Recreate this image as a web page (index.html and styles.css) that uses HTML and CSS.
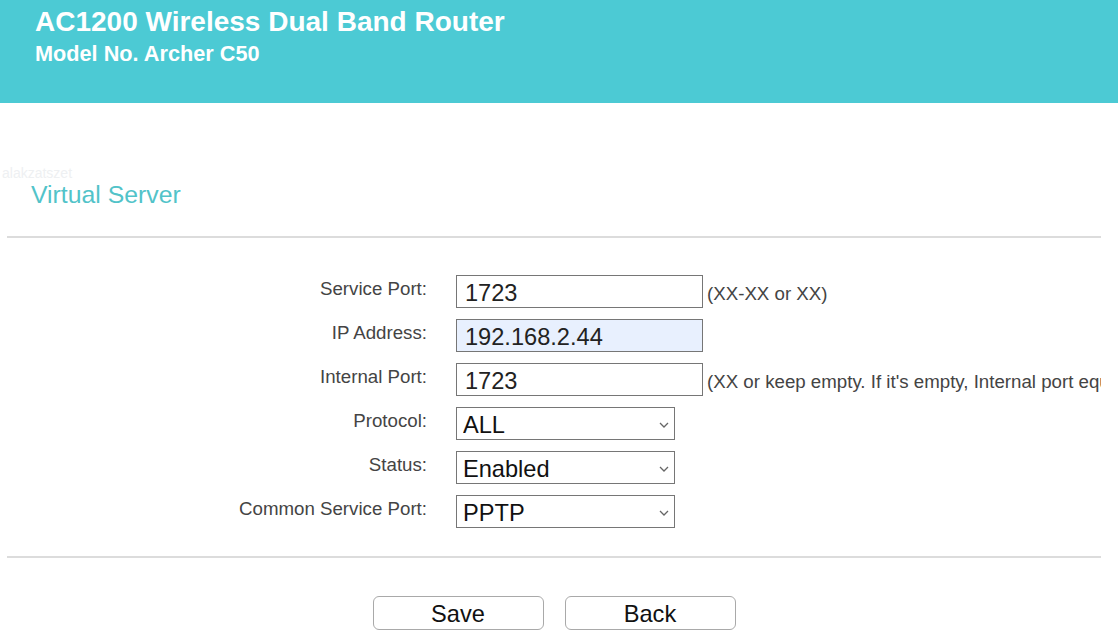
FILE: index.html
```html
<!DOCTYPE html>
<html>
<head>
<meta charset="utf-8">
<link rel="stylesheet" href="styles.css">
</head>
<body>
<header class="top">
  <div class="title">AC1200 Wireless Dual Band Router</div>
  <div class="model">Model No. Archer C50</div>
</header>
<div class="ghost">alakzatszet</div>
<main class="content">
  <h1 class="heading">Virtual Server</h1>
  <hr class="rule">
  <form class="form">
    <div class="row">
      <label class="label">Service Port:</label>
      <input class="field" type="text" value="1723">
      <span class="hint">(XX-XX or XX)</span>
    </div>
    <div class="row">
      <label class="label">IP Address:</label>
      <input class="field autofill" type="text" value="192.168.2.44">
    </div>
    <div class="row">
      <label class="label">Internal Port:</label>
      <input class="field" type="text" value="1723">
      <span class="hint">(XX or keep empty. If it's empty, Internal port equals to Service Port.)</span>
    </div>
    <div class="row">
      <label class="label">Protocol:</label>
      <div class="selwrap">
        <select class="sel"><option>ALL</option></select>
        <svg class="chev" width="10" height="6" viewBox="0 0 10 6"><path d="M1 1 L5 5 L9 1" fill="none" stroke="#666" stroke-width="1.3"/></svg>
      </div>
    </div>
    <div class="row">
      <label class="label">Status:</label>
      <div class="selwrap">
        <select class="sel"><option>Enabled</option></select>
        <svg class="chev" width="10" height="6" viewBox="0 0 10 6"><path d="M1 1 L5 5 L9 1" fill="none" stroke="#666" stroke-width="1.3"/></svg>
      </div>
    </div>
    <div class="row">
      <label class="label">Common Service Port:</label>
      <div class="selwrap">
        <select class="sel"><option>PPTP</option></select>
        <svg class="chev" width="10" height="6" viewBox="0 0 10 6"><path d="M1 1 L5 5 L9 1" fill="none" stroke="#666" stroke-width="1.3"/></svg>
      </div>
    </div>
  </form>
  <hr class="rule rule2">
  <div class="buttons">
    <button class="btn" type="button">Save</button>
    <button class="btn" type="button">Back</button>
  </div>
</main>
</body>
</html>
```
FILE: styles.css
```css
html, body {
  margin: 0;
  padding: 0;
  background: #fff;
  font-family: "Liberation Sans", Arial, sans-serif;
}
.top {
  height: 103px;
  box-sizing: border-box;
  background: #4ccad4;
  color: #fff;
  padding: 5px 0 0 35px;
}
.title {
  font-size: 28px;
  font-weight: bold;
  line-height: 34px;
}
.model {
  font-size: 21.7px;
  font-weight: bold;
  line-height: 28px;
  margin-top: 1px;
}
.ghost {
  font-size: 14px;
  color: #eef0f2;
  margin: 64px 0 0 2px;
  line-height: 13px;
  height: 13px;
}
.content {
  margin: 0 17px 0 7px;
  overflow: hidden;
  padding-bottom: 20px;
}
.heading {
  font-size: 24.8px;
  font-weight: normal;
  color: #52c3c9;
  margin: 0 0 0 24px;
  line-height: 30px;
}
.rule {
  border: 0;
  height: 2px;
  background: #dcdcdc;
  margin: 26px 0 0 0;
}
.form {
  margin-top: 37px;
  display: flex;
  flex-direction: column;
  gap: 11px;
}
.row {
  display: flex;
  align-items: center;
  height: 33px;
  white-space: nowrap;
}
.label {
  flex: none;
  width: 420px;
  text-align: right;
  font-size: 18.7px;
  color: #444;
  margin-right: 29px;
  margin-top: -6px;
}
.field {
  box-sizing: border-box;
  width: 247px;
  height: 33px;
  border: 1px solid #767676;
  border-radius: 0;
  padding: 3px 0 0 8px;
  font-family: "Liberation Sans", Arial, sans-serif;
  font-size: 23.6px;
  color: #222;
  background: #fff;
  margin: 0;
  flex: none;
}
.autofill {
  background: #e8f0fe;
}
.hint {
  flex: none;
  font-size: 18.7px;
  color: #444;
  margin-left: 4px;
  margin-top: 4px;
}
.selwrap {
  position: relative;
  width: 219px;
  height: 33px;
  flex: none;
}
.sel {
  -webkit-appearance: none;
  appearance: none;
  box-sizing: border-box;
  width: 219px;
  height: 33px;
  border: 1px solid #767676;
  border-radius: 0;
  background: #fff;
  font-family: "Liberation Sans", Arial, sans-serif;
  font-size: 23.6px;
  color: #111;
  padding: 3px 0 0 6px;
  margin: 0;
}
.chev {
  position: absolute;
  right: 6px;
  top: 15px;
}
.rule2 {
  margin-top: 28px;
}
.buttons {
  display: flex;
  justify-content: center;
  gap: 21px;
  margin-top: 38px;
}
.btn {
  box-sizing: border-box;
  width: 171px;
  height: 34px;
  border: 1px solid #a9a9a9;
  border-radius: 6px;
  background: #fff;
  font-family: "Liberation Sans", Arial, sans-serif;
  font-size: 23.6px;
  color: #111;
  padding: 2px 0 0 0;
}
```
